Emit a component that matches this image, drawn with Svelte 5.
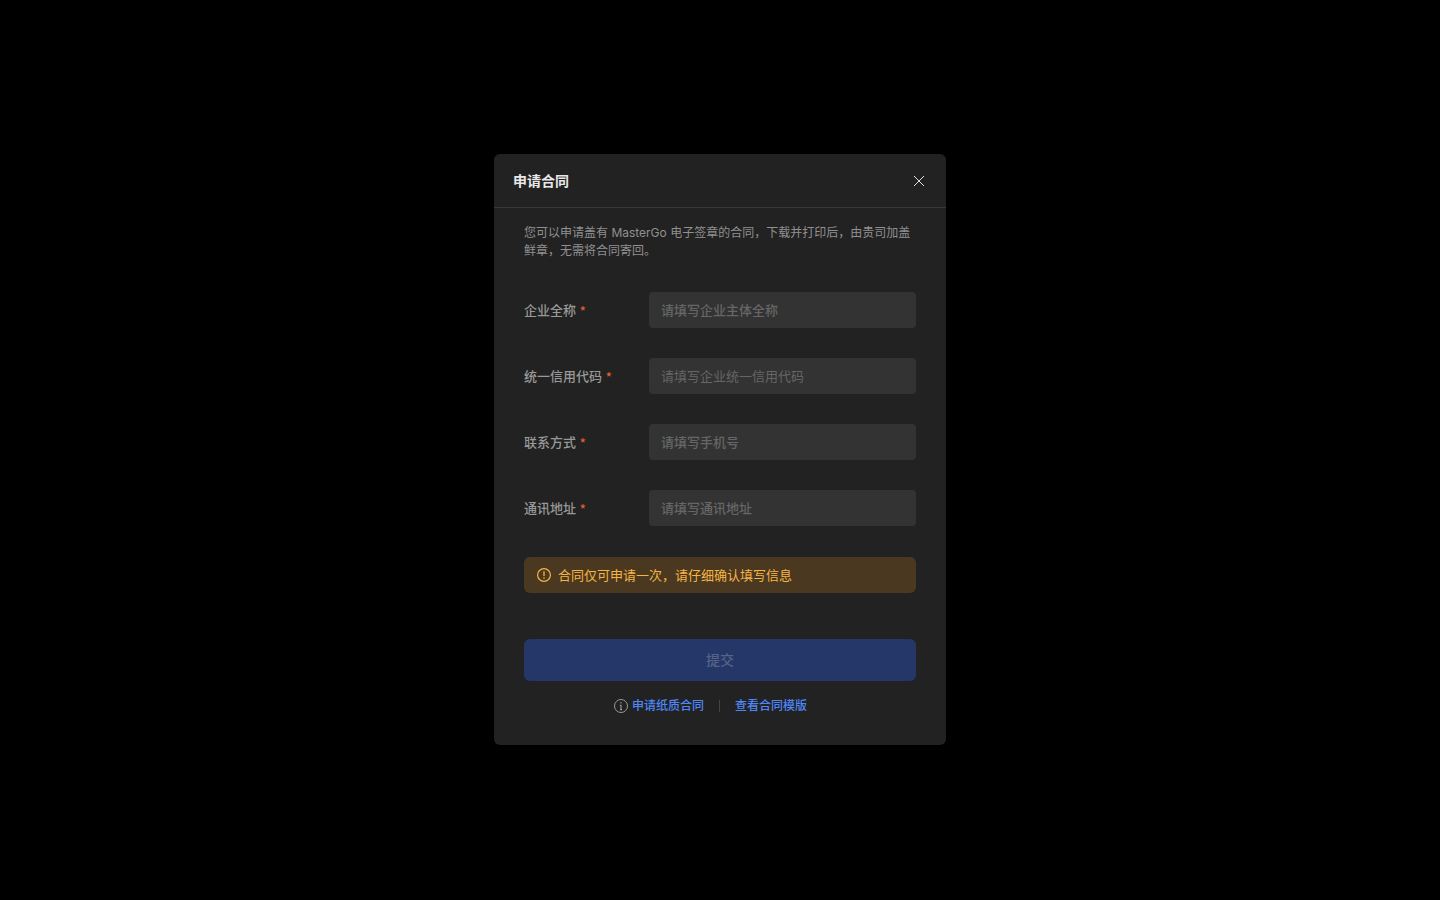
<script>
	const fields = [
		{ id: 'company', label: '企业全称', placeholder: '请填写企业主体全称' },
		{ id: 'creditCode', label: '统一信用代码', placeholder: '请填写企业统一信用代码', light: true },
		{ id: 'phone', label: '联系方式', placeholder: '请填写手机号' },
		{ id: 'address', label: '通讯地址', placeholder: '请填写通讯地址' }
	];

	let values = $state({ company: '', creditCode: '', phone: '', address: '' });
	let open = $state(true);

	let complete = $derived(fields.every((field) => values[field.id].trim() !== ''));
</script>

<div class="backdrop">
	{#if open}
		<div class="dialog" role="dialog" aria-labelledby="dialog-title">
			<header>
				<h2 id="dialog-title">申请合同</h2>
				<button class="close" type="button" aria-label="关闭" onclick={() => (open = false)}>
					<svg width="12" height="12" viewBox="0 0 12 12">
						<path d="M1 1l10 10M11 1L1 11" fill="none" stroke="currentColor" />
					</svg>
				</button>
			</header>

			<form onsubmit={(e) => e.preventDefault()}>
				<p class="intro">
					您可以申请盖有 MasterGo 电子签章的合同，下载并打印后，由贵司加盖鲜章，无需将合同寄回。
				</p>

				<div class="fields">
					{#each fields as field (field.id)}
						<div class="field">
							<label for={field.id}>{field.label} <span class="required">*</span></label>
							<input
								id={field.id}
								class:light={field.light}
								type="text"
								placeholder={field.placeholder}
								bind:value={values[field.id]}
							/>
						</div>
					{/each}
				</div>

				<div class="notice">
					<svg width="14" height="14" viewBox="0 0 14 14">
						<circle cx="7" cy="7" r="6.4" fill="none" stroke="currentColor" stroke-width="1.2" />
						<path d="M7 3.2v4.8M7 9.3v1.5" fill="none" stroke="currentColor" stroke-width="1.3" />
					</svg>
					<span>合同仅可申请一次，请仔细确认填写信息</span>
				</div>

				<button class="submit" type="submit" disabled={!complete}>提交</button>

				<div class="links">
					<svg width="14" height="14" viewBox="0 0 14 14">
						<circle cx="7" cy="7" r="6.5" fill="none" stroke="currentColor" />
						<path d="M7 3.1v1.5M5.8 6.2H7v4.4M6 10.6h2" fill="none" stroke="currentColor" stroke-width="1.1" />
					</svg>
					<a href="#paper">申请纸质合同</a>
					<span class="divider"></span>
					<a href="#template">查看合同模版</a>
				</div>
			</form>
		</div>
	{/if}
</div>

<style>
	:global(body) {
		background: #000;
	}

	.backdrop {
		display: flex;
		align-items: center;
		justify-content: center;
		min-height: 100vh;
		padding: 0 16px 1px;
		box-sizing: border-box;
		font-family: Inter, 'Noto Sans CJK SC', sans-serif;
		font-size: 13px;
		line-height: 18px;
	}

	.dialog {
		width: 100%;
		max-width: 452px;
		border-radius: 6px;
		background: #222;
	}

	header {
		display: flex;
		align-items: center;
		justify-content: space-between;
		height: 53px;
		padding: 0 19px;
		border-bottom: 1px solid #383838;
	}

	h2 {
		margin: 0;
		color: #e8e8e8;
		font-size: 14px;
		font-weight: 600;
	}

	button {
		border: none;
		font-family: inherit;
		cursor: pointer;
	}

	.close {
		display: flex;
		padding: 2px;
		background: none;
		color: #e0e0e0;
	}

	form {
		padding: 16px 30px 30px;
	}

	.intro {
		margin: 0 0 32px;
		color: #909090;
		font-size: 12px;
	}

	.fields {
		display: flex;
		flex-direction: column;
		gap: 30px;
	}

	.field {
		display: flex;
		align-items: center;
	}

	label {
		width: 125px;
		flex-shrink: 0;
		color: #989898;
		font-weight: 500;
	}

	.required {
		color: #e8603c;
		font-family: 'Noto Sans CJK SC', sans-serif;
		font-size: 14px;
		font-weight: 400;
		vertical-align: middle;
		line-height: 1;
	}

	input {
		flex: 1;
		min-width: 0;
		height: 36px;
		padding: 0 12px;
		border: none;
		border-radius: 4px;
		box-sizing: border-box;
		background: #333;
		color: #e8e8e8;
		font: inherit;
		font-weight: 500;
		outline: none;
	}

	input.light {
		font-weight: 400;
	}

	input::placeholder {
		color: #666;
		opacity: 1;
	}

	.notice {
		display: flex;
		align-items: center;
		gap: 7px;
		height: 36px;
		margin: 31px 0 46px;
		padding: 0 13px;
		border-radius: 6px;
		box-sizing: border-box;
		background: #4a3820;
		color: #f5b544;
	}

	.submit {
		display: block;
		width: 100%;
		height: 42px;
		border-radius: 6px;
		background: #3f6fe8;
		color: #fff;
		font-size: 14px;
		font-weight: 500;
		line-height: 18px;
	}

	.submit:disabled {
		background: #243768;
		color: #576287;
		cursor: default;
	}

	.links {
		display: flex;
		align-items: center;
		justify-content: center;
		margin: 16px 19px 0 0;
		color: #999;
		font-size: 12px;
	}

	.links a {
		color: #4e86f7;
		font-weight: 500;
		text-decoration: none;
	}

	.links svg {
		margin-right: 4px;
	}

	.divider {
		width: 1px;
		height: 12px;
		margin: 0 15px;
		background: #444;
	}
</style>
